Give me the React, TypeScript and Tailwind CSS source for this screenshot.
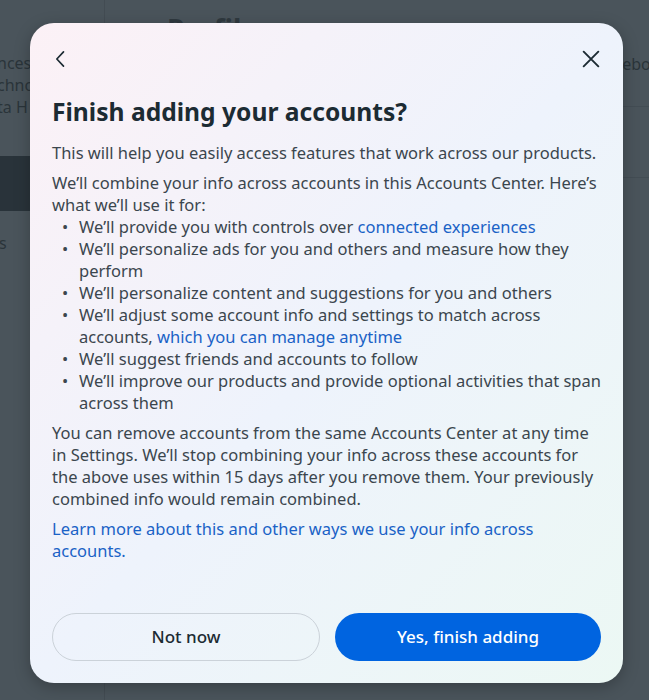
import React from "react";

const font = { fontFamily: '"Noto Sans", "Open Sans", sans-serif' };

const Link = ({ children }: { children: React.ReactNode }) => (
  <a href="#" className="text-[#1a62c6]">
    {children}
  </a>
);

const Bullet = ({ children }: { children: React.ReactNode }) => (
  <li className="flex">
    <span className="w-[27px] shrink-0 pl-[10px]">•</span>
    <span>{children}</span>
  </li>
);

const Background = () => (
  <div className="absolute inset-0 flex bg-[#4a545b] text-[#2a343a]">
    <div className="w-[105px] shrink-0 border-r border-[#434c53] pt-[52px]">
      <div className="-ml-[12px] text-[16px] leading-[22px]">
        <p>ences</p>
        <p>echno</p>
        <p>eta H</p>
      </div>
      <div className="mt-[38px] h-[55px] bg-[#29333a]" />
      <p className="mt-[20px] -ml-[10px] text-[16px]">es</p>
    </div>
    <div className="flex-1">
      <h1 className="ml-[62px] mt-[8px] text-[28px] font-bold text-[#2f393f]">Profiles</h1>
      <div className="mt-[2px] flex justify-end">
        <p className="-mr-[20px] text-[16px]">Facebook</p>
      </div>
      <div className="mt-[30px] border-t border-[#434d54]" />
      <div className="mt-[70px] border-t border-[#434d54]" />
    </div>
  </div>
);

export default function App() {
  return (
    <div className="relative h-[700px] w-full overflow-hidden" style={font}>
      <Background />
      <div className="absolute inset-0 flex items-start pl-[30px] pt-[23px]">
        <div className="flex h-[660px] w-[593px] flex-col rounded-[24px] bg-gradient-to-br from-[#fcf1f6] via-[#eef3fc] to-[#ecf8f4] px-[22px] pb-[22px] shadow-[0_4px_16px_rgba(0,0,0,0.25)]">
          <div className="mt-[12px] flex h-[48px] items-center justify-between">
            <button className="-ml-[5px] flex h-[28px] w-[28px] items-center justify-center text-[#1c2b33]">
              <svg width="20" height="20" viewBox="0 0 24 24" fill="none" stroke="currentColor" strokeWidth="2" strokeLinecap="round" strokeLinejoin="round">
                <path d="M15 3.5 7 12l8 8.5" />
              </svg>
            </button>
            <button className="-mr-[4px] flex h-[28px] w-[28px] items-center justify-center text-[#1c2b33]">
              <svg width="22" height="22" viewBox="0 0 24 24" fill="none" stroke="currentColor" strokeWidth="2.1" strokeLinecap="round">
                <path d="M4 4 20 20M20 4 4 20" />
              </svg>
            </button>
          </div>

          <h2 className="mt-[14px] text-[24.6px] font-bold leading-[30px] text-[#1c2b33]">
            Finish adding your accounts?
          </h2>

          <div className="mt-[15px] text-[16.5px] leading-[22px] text-[#3b464e]">
            <p>This will help you easily access features that work across our products.</p>
            <p className="mt-[8px]">
              We’ll combine your info across accounts in this Accounts Center. Here’s what we’ll use it for:
            </p>
            <ul>
              <Bullet>
                We’ll provide you with controls over <Link>connected experiences</Link>
              </Bullet>
              <Bullet>We’ll personalize ads for you and others and measure how they perform</Bullet>
              <Bullet>We’ll personalize content and suggestions for you and others</Bullet>
              <Bullet>
                We’ll adjust some account info and settings to match across accounts,{" "}
                <Link>which you can manage anytime</Link>
              </Bullet>
              <Bullet>We’ll suggest friends and accounts to follow</Bullet>
              <Bullet>We’ll improve our products and provide optional activities that span across them</Bullet>
            </ul>
            <p className="mt-[8px]">
              You can remove accounts from the same Accounts Center at any time in Settings. We’ll stop combining
              your info across these accounts for the above uses within 15 days after you remove them. Your
              previously combined info would remain combined.
            </p>
            <p className="mt-[8px]">
              <Link>Learn more about this and other ways we use your info across accounts.</Link>
            </p>
          </div>

          <div className="mt-auto flex gap-[15px]">
            <button className="h-[48px] flex-1 rounded-full border border-[#cbd2d9] text-[17px] font-medium text-[#1c2b33]">
              Not now
            </button>
            <button className="h-[48px] flex-1 rounded-full bg-[#0064e0] text-[17px] font-medium text-white">
              Yes, finish adding
            </button>
          </div>
        </div>
      </div>
    </div>
  );
}
